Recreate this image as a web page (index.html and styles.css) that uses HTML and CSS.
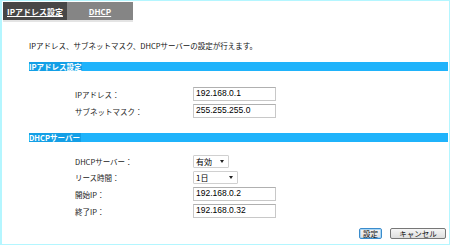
FILE: index.html
```html
<!DOCTYPE html>
<html lang="ja">
<head>
<meta charset="utf-8">
<link rel="stylesheet" href="styles.css">
</head>
<body>
<div class="frame">
  <div class="tabs">
    <a class="tab tab-active">IPアドレス設定</a>
    <a class="tab tab-idle">DHCP</a>
  </div>
  <div class="content">
    <p class="intro">IPアドレス、サブネットマスク、DHCPサーバーの設定が行えます。</p>
    <div class="bar"><span class="bar-title">IPアドレス設定</span></div>
    <div class="rows rows-ip">
      <div class="row"><span class="label">IPアドレス：</span><span class="field">192.168.0.1</span></div>
      <div class="row"><span class="label">サブネットマスク：</span><span class="field">255.255.255.0</span></div>
    </div>
    <div class="bar"><span class="bar-title">DHCPサーバー</span></div>
    <div class="rows rows-dhcp">
      <div class="row"><span class="label">DHCPサーバー：</span><span class="select sel-short"><span>有効</span><span class="caret"></span></span></div>
      <div class="row"><span class="label">リース時間：</span><span class="select sel-long"><span>1日</span><span class="caret"></span></span></div>
      <div class="row"><span class="label">開始IP：</span><span class="field">192.168.0.2</span></div>
      <div class="row"><span class="label">終了IP：</span><span class="field">192.168.0.32</span></div>
    </div>
    <div class="actions">
      <button class="btn btn-primary">設定</button>
      <button class="btn btn-cancel">キャンセル</button>
    </div>
  </div>
</div>
</body>
</html>
```
FILE: styles.css
```css
html, body {
  margin: 0;
  padding: 0;
  background: #fff;
}
body {
  font-family: "Noto Sans CJK JP", "Liberation Sans", sans-serif;
  font-size: 7.5px;
  color: #222;
}
.frame {
  width: 450px;
  height: 245px;
  box-sizing: border-box;
  border: 1px solid #b4f6ff;
  border-left: 2px solid #b4f6ff;
  display: flex;
  flex-direction: column;
}
.tabs {
  display: flex;
  margin: 1px 0 0 1px;
  width: 130px;
  border-bottom: 2px solid #e4e4e4;
}
.tab {
  height: 18px;
  display: flex;
  align-items: center;
  justify-content: center;
  color: #fff;
  font-weight: bold;
  text-decoration: underline;
  font-size: 8px;
}
.tab-active {
  width: 64px;
  background: #474747;
}
.tab-idle {
  width: 66px;
  background: #858585;
}
.content {
  padding: 0 1px 0 27px;
  display: flex;
  flex-direction: column;
  flex: 1;
}
.intro {
  margin: 19px 0 0 0;
  line-height: 10px;
  color: #111;
}
.bar {
  margin-top: 11px;
  height: 9px;
  background: #1fb3fb;
  display: flex;
  align-items: center;
}
.bar-title {
  color: #fff;
  font-weight: bold;
  line-height: 9px;
  background: #139fe6;
  padding-right: 1px;
}
.rows {
  display: flex;
  flex-direction: column;
  gap: 3px;
  padding-left: 46px;
}
.rows-ip {
  margin-top: 16px;
  margin-bottom: 4px;
}
.rows-dhcp {
  margin-top: 13px;
  gap: 3px;
}
.row {
  display: flex;
  align-items: center;
  height: 13px;
}
.label {
  width: 118px;
  color: #222;
}
.field {
  width: 83px;
  height: 13px;
  box-sizing: border-box;
  border: 1px solid #c8c8c8;
  border-top-color: #b0b0b0;
  font-family: "Liberation Sans", sans-serif;
  font-size: 8.5px;
  line-height: 11px;
  padding-left: 2px;
  color: #000;
}
.rows-dhcp .row:nth-child(3),
.rows-dhcp .row:nth-child(4) {
  height: 14px;
}
.rows-dhcp .row:nth-child(3) .field,
.rows-dhcp .row:nth-child(4) .field {
  height: 14px;
}
.rows-ip .row {
  height: 14px;
}
.rows-ip .field {
  height: 14px;
}
.select {
  height: 13px;
  box-sizing: border-box;
  border: 1px solid #d0d0d0;
  border-radius: 1px;
  display: flex;
  align-items: center;
  justify-content: space-between;
  padding: 0 4px 0 2px;
  color: #000;
  font-size: 8px;
  background: #fff;
}
.sel-short { width: 36px; }
.sel-long { width: 45px; }
.caret {
  width: 0;
  height: 0;
  border-left: 2.5px solid transparent;
  border-right: 2.5px solid transparent;
  border-top: 3px solid #222;
}
.actions {
  display: flex;
  justify-content: flex-end;
  gap: 8px;
  margin-top: 10px;
  padding-right: 2px;
}
.btn {
  height: 11px;
  box-sizing: border-box;
  padding: 0;
  font-family: "Noto Sans CJK JP", sans-serif;
  font-size: 7.5px;
  line-height: 9px;
  color: #111;
  background: linear-gradient(#f6f6f6, #dedede);
  border: 1px solid #777;
  border-radius: 2px;
}
.btn-primary {
  width: 23px;
  border-color: #3a8ccc;
  box-shadow: inset 0 0 0 1px #a9d6f5;
}
.btn-cancel {
  width: 56px;
}
```
